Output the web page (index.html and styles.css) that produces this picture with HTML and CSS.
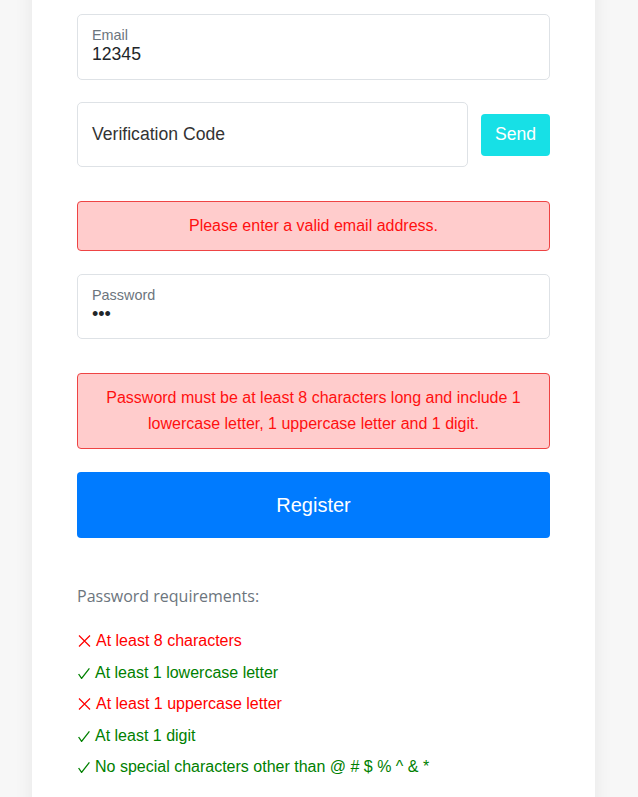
FILE: index.html
```html
<!DOCTYPE html>
<html lang="en">
<head>
<meta charset="utf-8">
<title>Register</title>
<link rel="stylesheet" href="styles.css">
</head>
<body>
<div class="card">
  <div class="field floating email">
    <div class="label">Email</div>
    <div class="value">12345</div>
  </div>

  <div class="code-row">
    <div class="field plain">Verification Code</div>
    <button class="btn-send">Send</button>
  </div>

  <div class="alert">Please enter a valid email address.</div>

  <div class="field floating">
    <div class="label">Password</div>
    <div class="value dots">&#8226;&#8226;&#8226;</div>
  </div>

  <div class="alert">Password must be at least 8 characters long and include 1 lowercase letter, 1 uppercase letter and 1 digit.</div>

  <button class="btn-register">Register</button>

  <div class="req-title">Password requirements:</div>
  <ul class="req-list">
    <li class="bad"><svg class="mark" width="13" height="12" viewBox="0 0 13 12"><path d="M1 0.5 L12 11.5 M12 0.5 L1 11.5" stroke="currentColor" stroke-width="1.2" fill="none"/></svg>At least 8 characters</li>
    <li class="good"><svg class="mark check" width="12" height="11" viewBox="0 0 12 11"><path d="M0.6 6 L3.6 10.4 L11.4 0.4" stroke="currentColor" stroke-width="1.3" fill="none"/></svg>At least 1 lowercase letter</li>
    <li class="bad"><svg class="mark" width="13" height="12" viewBox="0 0 13 12"><path d="M1 0.5 L12 11.5 M12 0.5 L1 11.5" stroke="currentColor" stroke-width="1.2" fill="none"/></svg>At least 1 uppercase letter</li>
    <li class="good"><svg class="mark check" width="12" height="11" viewBox="0 0 12 11"><path d="M0.6 6 L3.6 10.4 L11.4 0.4" stroke="currentColor" stroke-width="1.3" fill="none"/></svg>At least 1 digit</li>
    <li class="good"><svg class="mark check" width="12" height="11" viewBox="0 0 12 11"><path d="M0.6 6 L3.6 10.4 L11.4 0.4" stroke="currentColor" stroke-width="1.3" fill="none"/></svg>No special characters other than @ # $ % ^ &amp; *</li>
  </ul>
</div>
</body>
</html>
```

FILE: styles.css
```css
html, body {
  margin: 0;
  padding: 0;
  background: #f7f7f7;
  font-family: "Liberation Sans", Arial, sans-serif;
  overflow: hidden;
}

.card {
  width: 563px;
  box-sizing: border-box;
  margin: -30px 0 0 32px;
  padding: 44px 45px 40px;
  background: #ffffff;
  box-shadow: 0 0 18px rgba(0, 0, 0, 0.07);
  min-height: 860px;
}

.field {
  box-sizing: border-box;
  border: 1px solid #dee2e6;
  border-radius: 5px;
  background: #fff;
  color: #212529;
}

.floating {
  height: 65px;
  padding: 11px 14px 0;
}

.floating.email {
  height: 66px;
}

.floating .label {
  font-size: 14.4px;
  line-height: 18px;
  color: #6c757d;
}

.floating .value {
  font-size: 17.6px;
  line-height: 21px;
  color: #212529;
}

.floating .dots {
  font-size: 18px;
  line-height: 20px;
  letter-spacing: 0;
}

.code-row {
  display: flex;
  align-items: center;
  gap: 13px;
  margin-top: 22px;
}

.plain {
  flex: 1;
  height: 65px;
  display: flex;
  align-items: center;
  padding: 0 14px;
  font-size: 17.6px;
  color: #333;
}

.btn-send {
  width: 69px;
  height: 42px;
  border: none;
  border-radius: 4px;
  background: #17e0e6;
  color: #fff;
  font-family: "Liberation Sans", Arial, sans-serif;
  font-size: 17.6px;
  padding: 0;
}

.alert {
  margin-top: 34px;
  box-sizing: border-box;
  border: 1px solid #ee4444;
  border-radius: 4px;
  background: #ffcccc;
  color: #ff1010;
  font-size: 16px;
  line-height: 26px;
  text-align: center;
  padding: 11px 18px;
}

.alert + .field {
  margin-top: 23px;
}

.btn-register {
  display: block;
  width: 100%;
  height: 66px;
  margin-top: 23px;
  border: none;
  border-radius: 4px;
  background: #007bff;
  color: #fff;
  font-family: "Liberation Sans", Arial, sans-serif;
  font-size: 20px;
  padding: 0;
}

.req-title {
  margin-top: 47px;
  font-family: "Open Sans", sans-serif;
  font-size: 16px;
  line-height: 22px;
  color: #6c757d;
}

.req-list {
  list-style: none;
  margin: 18px 0 0;
  padding: 0;
}

.req-list li {
  display: flex;
  align-items: center;
  font-size: 16px;
  line-height: 31.5px;
}

.req-list .mark {
  flex: none;
  margin: 0 5px 0 1px;
}

.req-list .mark.check {
  margin: 2px 5px 0 1px;
}

.bad {
  color: #ff0000;
}

.good {
  color: #008000;
}
```
